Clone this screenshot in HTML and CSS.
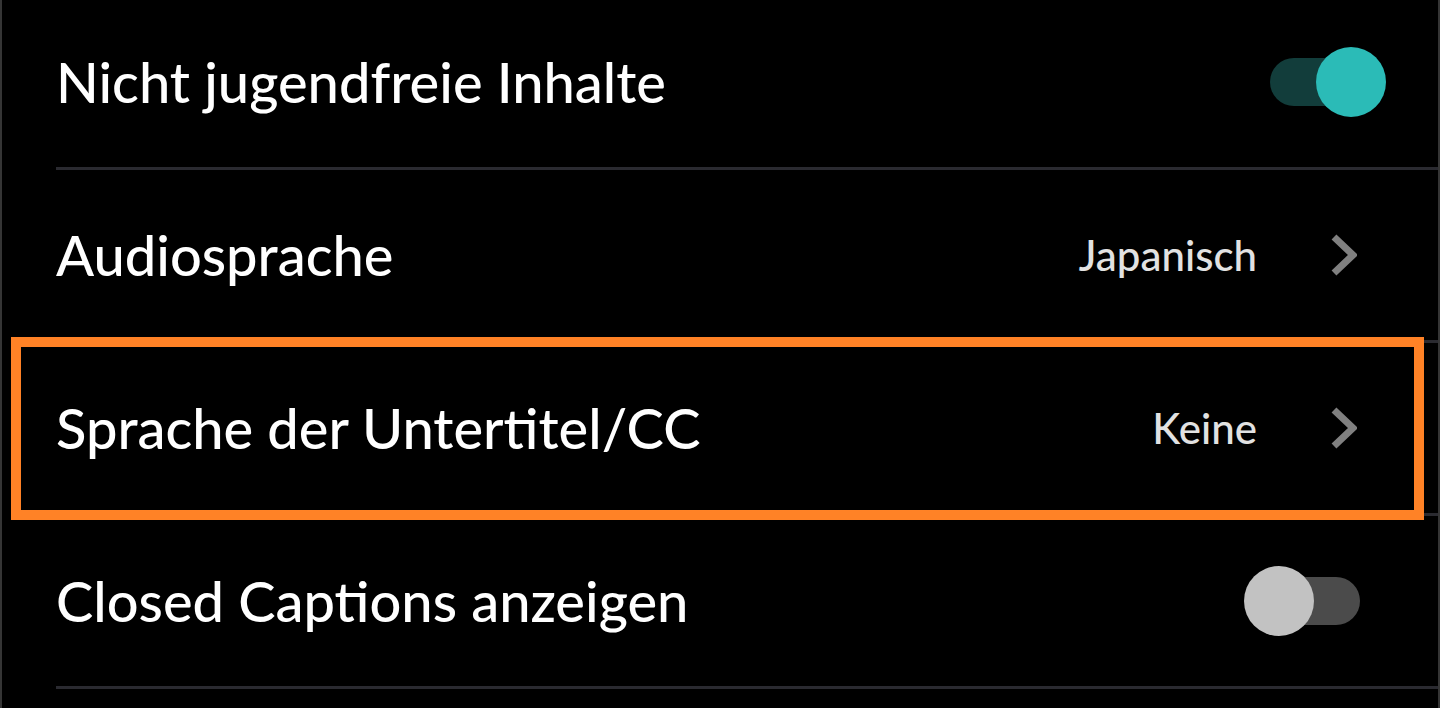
FILE: index.html
```html
<!DOCTYPE html>
<html lang="de">
<head>
<meta charset="utf-8">
<title>Einstellungen</title>
<link rel="stylesheet" href="styles.css">
</head>
<body>
<div class="screen">
  <ul class="list">
    <li class="item first">
      <span class="label">Nicht jugendfreie Inhalte</span>
      <span class="toggle on"><span class="knob"></span></span>
    </li>
    <li class="item">
      <span class="label">Audiosprache</span>
      <span class="value">Japanisch</span>
      <svg class="chev" width="26" height="42" viewBox="0 0 26 42"><path d="M3 3 L22 21 L3 39" fill="none" stroke="#808080" stroke-width="7"/></svg>
    </li>
    <li class="item">
      <span class="label">Sprache der Untertitel/CC</span>
      <span class="value">Keine</span>
      <svg class="chev" width="26" height="42" viewBox="0 0 26 42"><path d="M3 3 L22 21 L3 39" fill="none" stroke="#808080" stroke-width="7"/></svg>
    </li>
    <li class="item">
      <span class="label">Closed Captions anzeigen</span>
      <span class="toggle off"><span class="knob"></span></span>
    </li>
  </ul>
  <div class="highlight"></div>
</div>
</body>
</html>
```
FILE: styles.css
```css
html, body {
  margin: 0;
  padding: 0;
  background: #000;
}
.screen {
  position: relative;
  height: 708px;
  overflow: hidden;
  border-left: 2px solid #353535;
  border-right: 2px solid #353535;
  box-sizing: border-box;
  font-family: Lato, "Open Sans", sans-serif;
}
.list {
  list-style: none;
  margin: 0;
  padding: 0;
}
.item {
  display: flex;
  align-items: center;
  height: 170px;
  margin-left: 54px;
  border-bottom: 3px solid #2a2a30;
  padding-right: 52px;
}
.item.first {
  margin-top: -3px;
}
.label {
  flex: 1;
  color: #fff;
  font-size: 56px;
  font-weight: 500;
  line-height: 1;
  padding-left: 0;
}
.value {
  color: #e2e2e2;
  font-size: 42px;
  font-weight: 500;
  line-height: 1;
  margin-right: 74px;
}
.chev {
  display: block;
  margin-right: 29px;
}
.toggle {
  position: relative;
  display: block;
  width: 90px;
  height: 48px;
  border-radius: 24px;
  margin-right: 26px;
}
.toggle.on {
  background: #123d3b;
}
.toggle.off {
  background: #4b4b4b;
}
.knob {
  position: absolute;
  top: -11px;
  width: 70px;
  height: 70px;
  border-radius: 50%;
}
.toggle.on .knob {
  right: -26px;
  background: #2bbbb7;
}
.toggle.off .knob {
  left: -26px;
  background: #c2c2c2;
}
.highlight {
  position: absolute;
  left: 9px;
  top: 337px;
  width: 1413px;
  height: 183px;
  border: 10px solid #ff8226;
  box-sizing: border-box;
}
```
